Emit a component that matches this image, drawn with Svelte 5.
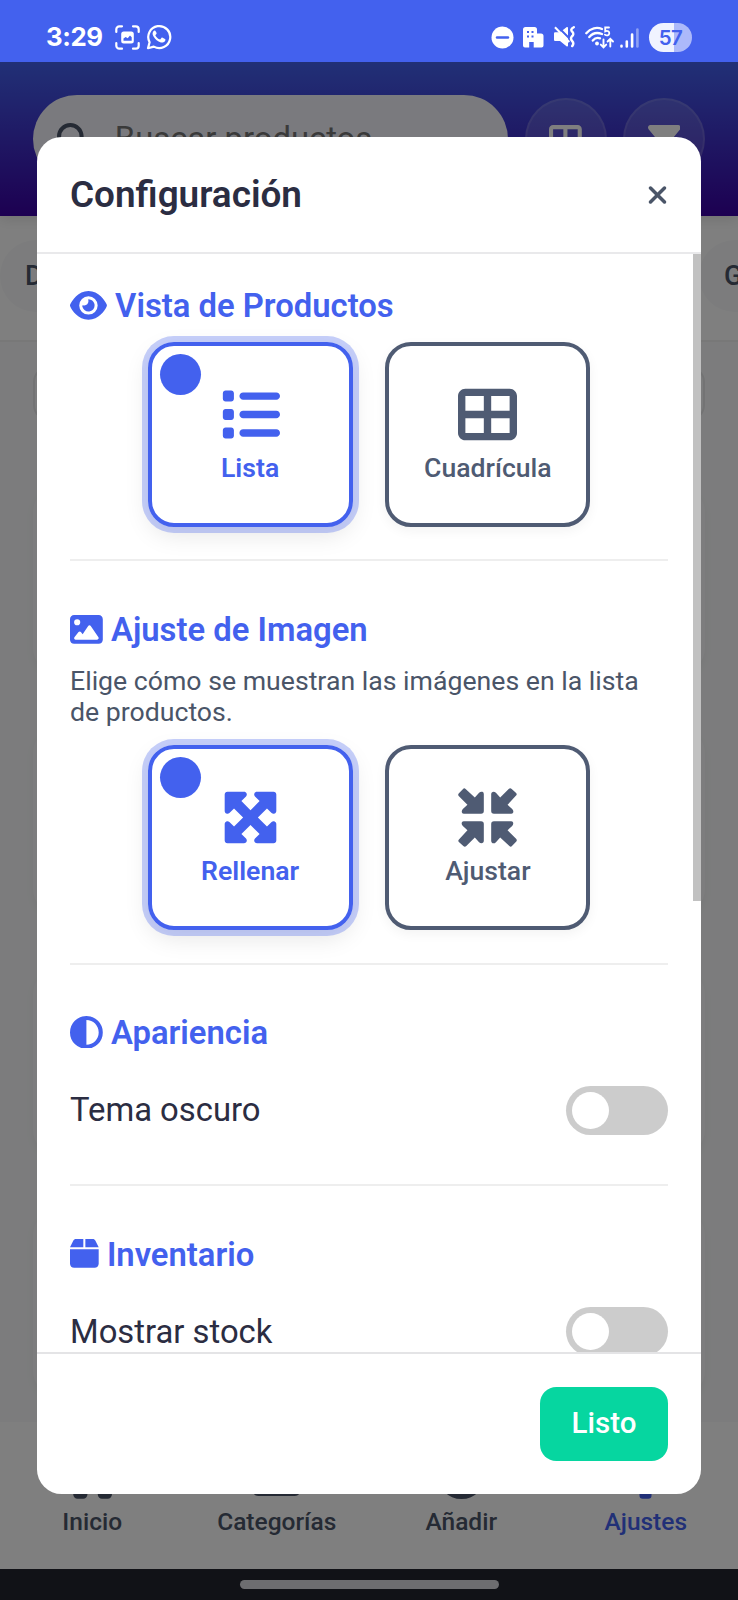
<script>
  const arrowIn = 'M66 8L146 82L183 42Q196 28 212 33Q224 38 224 52V200Q224 224 200 224H52Q38 224 34 212Q29 196 42 183L82 146L8 72Q-5 59 8 46L42 10Q54 -4 66 8z';

  const icons = {
    eye: { w: 576, d: 'M288 32c-80.8 0-145.5 36.8-192.6 80.6C48.6 156 17.3 208 2.5 243.7c-3.3 7.9-3.3 16.7 0 24.6C17.3 304 48.6 356 95.4 399.4C142.5 443.2 207.2 480 288 480s145.5-36.8 192.6-80.6c46.8-43.5 78.1-95.4 93-131.1c3.3-7.9 3.3-16.7 0-24.6c-14.9-35.7-46.2-87.7-93-131.1C433.5 68.8 368.8 32 288 32zM144 256a144 144 0 1 1 288 0 144 144 0 1 1 -288 0zm144-64c0 35.3-28.7 64-64 64c-7.1 0-13.9-1.2-20.3-3.3c-5.5-1.8-11.9 1.6-11.7 7.4c.3 6.9 1.3 13.8 3.2 20.7c13.7 51.2 66.4 81.6 117.6 67.9s81.6-66.4 67.9-117.6c-11.1-41.5-47.8-69.4-88.6-71.1c-5.8-.2-9.2 6.1-7.4 11.7c2.1 6.4 3.3 13.2 3.3 20.3z' },
    image: { w: 512, d: 'M0 96C0 60.7 28.7 32 64 32H448c35.3 0 64 28.7 64 64V416c0 35.3-28.7 64-64 64H64c-35.3 0-64-28.7-64-64V96zM323.8 202.5c-4.5-6.6-11.9-10.5-19.8-10.5s-15.4 3.9-19.8 10.5l-87 127.6L170.7 297c-4.6-5.7-11.5-9-18.7-9s-14.2 3.3-18.7 9l-64 80c-5.8 7.2-6.9 17.1-2.9 25.4s12.4 13.6 21.6 13.6h96 32H424c8.9 0 17.1-4.9 21.2-12.8s3.6-17.4-1.4-24.7l-120-176zM112 192a48 48 0 1 0 0-96 48 48 0 1 0 0 96z' },
    half: { w: 512, d: 'M448 256c0-106-86-192-192-192V448c106 0 192-86 192-192zM0 256a256 256 0 1 1 512 0A256 256 0 1 1 0 256z' },
    box: { w: 448, d: 'M50.7 58.5L0 160H208V32H93.7C75.5 32 58.9 42.3 50.7 58.5zM240 160H448L397.3 58.5C389.1 42.3 372.5 32 354.3 32H240V160zm208 32H0V416c0 35.3 28.7 64 64 64H384c35.3 0 64-28.7 64-64V192z' },
    list: { w: 512, d: 'M40 48C26.7 48 16 58.7 16 72v48c0 13.3 10.7 24 24 24H88c13.3 0 24-10.7 24-24V72c0-13.3-10.7-24-24-24H40zM192 64c-17.7 0-32 14.3-32 32s14.3 32 32 32H480c17.7 0 32-14.3 32-32s-14.3-32-32-32H192zm0 160c-17.7 0-32 14.3-32 32s14.3 32 32 32H480c17.7 0 32-14.3 32-32s-14.3-32-32-32H192zm0 160c-17.7 0-32 14.3-32 32s14.3 32 32 32H480c17.7 0 32-14.3 32-32s-14.3-32-32-32H192zM16 232v48c0 13.3 10.7 24 24 24H88c13.3 0 24-10.7 24-24V232c0-13.3-10.7-24-24-24H40c-13.3 0-24 10.7-24 24zM40 368c-13.3 0-24 10.7-24 24v48c0 13.3 10.7 24 24 24H88c13.3 0 24-10.7 24-24V392c0-13.3-10.7-24-24-24H40z' },
    grid: { w: 512, d: 'M448 96V224H288V96H448zm0 192V416H288V288H448zM224 224H64V96H224V224zM64 288H224V416H64V288zM64 32C28.7 32 0 60.7 0 96V416c0 35.3 28.7 64 64 64H448c35.3 0 64-28.7 64-64V96c0-35.3-28.7-64-64-64H64z' },
    maximize: { w: 512, d: 'M200 32H56C42.7 32 32 42.7 32 56V200c0 9.7 5.8 18.5 14.8 22.2s19.3 1.7 26.2-5.2l40-40 79 79-79 79L73 295c-6.9-6.9-17.2-8.9-26.2-5.2S32 302.3 32 312V456c0 13.3 10.7 24 24 24H200c9.7 0 18.5-5.8 22.2-14.8s1.7-19.3-5.2-26.2l-40-40 79-79 79 79-40 40c-6.9 6.9-8.9 17.2-5.2 26.2s12.5 14.8 22.2 14.8H456c13.3 0 24-10.7 24-24V312c0-9.7-5.8-18.5-14.8-22.2s-19.3-1.7-26.2 5.2l-40 40-79-79 79-79 40 40c6.9 6.9 17.2 8.9 26.2 5.2s14.8-12.5 14.8-22.2V56c0-13.3-10.7-24-24-24H312c-9.7 0-18.5 5.8-22.2 14.8s-1.7 19.3 5.2 26.2l40 40-79 79-79-79 40-40c6.9-6.9 8.9-17.2 5.2-26.2S209.7 32 200 32z' },
    minimize: { w: 512, turns: [90, 180, 270], d: arrowIn },
    close: { w: 384, d: 'M342.6 150.6c12.5-12.5 12.5-32.8 0-45.3s-32.8-12.5-45.3 0L192 210.7 86.6 105.4c-12.5-12.5-32.8-12.5-45.3 0s-12.5 32.8 0 45.3L146.7 256 41.4 361.4c-12.5 12.5-12.5 32.8 0 45.3s32.8 12.5 45.3 0L192 301.3 297.4 406.6c12.5 12.5 32.8 12.5 45.3 0s12.5-32.8 0-45.3L237.3 256 342.6 150.6z' },
    filter: { w: 512, d: 'M3.9 54.9C10.5 40.9 24.5 32 40 32H472c15.5 0 29.5 8.9 36.1 22.9s4.6 30.5-5.2 42.5L320 320.9V448c0 12.1-6.8 23.2-17.7 28.6s-23.8 4.3-33.5-3l-64-48c-8.1-6-12.8-15.5-12.8-25.6V320.9L9 97.3C-.7 85.4-2.8 68.8 3.9 54.9z' },
    search: { w: 512, d: 'M416 208c0 45.9-14.9 88.3-40 122.7L502.6 457.4c12.5 12.5 12.5 32.8 0 45.3s-32.8 12.5-45.3 0L330.7 376c-34.4 25.2-76.8 40-122.7 40C93.1 416 0 322.9 0 208S93.1 0 208 0S416 93.1 416 208zM208 352a144 144 0 1 0 0-288 144 144 0 1 0 0 288z' },
    home: { w: 512, d: 'M256 20L10 240h45v226a44 44 0 0 0 44 44h60a44 44 0 0 0 44-44v-76h108v76a44 44 0 0 0 44 44h60a44 44 0 0 0 44-44V240h45z' },
    folder: { w: 512, d: 'M64 480H448c35.3 0 64-28.7 64-64V160c0-35.3-28.7-64-64-64H288L240 45c-8-8-20-13-32-13H64C28.7 32 0 60.7 0 96V416c0 35.3 28.7 64 64 64z' },
    plus: { w: 512, d: 'M256 512A256 256 0 1 0 256 0a256 256 0 1 0 0 512zM232 344V280H168V232h64V168h48v64h64v48H280v64z' },
    sliders: { w: 512, d: 'M224 30a30 30 0 0 1 64 0V140H224zM180 160H332V270H180zM193 290H319V476a34 34 0 0 1-34 34H227a34 34 0 0 1-34-34z' }
  };

  const viewOptions = [
    { icon: 'list', label: 'Lista', active: true },
    { icon: 'grid', label: 'Cuadrícula', active: false }
  ];
  const fitOptions = [
    { icon: 'maximize', label: 'Rellenar', active: true },
    { icon: 'minimize', label: 'Ajustar', active: false }
  ];
  const nav = [
    { icon: 'home', label: 'Inicio' },
    { icon: 'folder', label: 'Categorías' },
    { icon: 'plus', label: 'Añadir' },
    { icon: 'sliders', label: 'Ajustes', current: true }
  ];
</script>

{#snippet glyph(name)}
  <svg class="glyph" viewBox="0 0 {icons[name].w} 512" style:width="{icons[name].w / 512}em" aria-hidden="true">
    <path d={icons[name].d} />
    {#each icons[name].turns ?? [] as angle}<path d={icons[name].d} transform="rotate({angle} 256 256)" />{/each}
  </svg>
{/snippet}

{#snippet cards(options)}
  <div class="options">
    {#each options as o}
      <button class="option" class:active={o.active}>
        {#if o.active}<span class="dot"></span>{/if}
        {@render glyph(o.icon)}
        <span class="option-label">{o.label}</span>
      </button>
    {/each}
  </div>
{/snippet}

<div class="phone">
  <div class="status">
    <span class="time">3:29</span>
    <svg class="s-shot" width="25" height="25" viewBox="0 0 25 25" fill="none" stroke="#fff" stroke-width="2.2" stroke-linecap="round">
      <path d="M1.3 7V4.3a3 3 0 0 1 3-3H7M18 1.3h2.7a3 3 0 0 1 3 3V7M23.7 18v2.7a3 3 0 0 1-3 3H18M7 23.7H4.300a3 3 0 0 1-3-3V18" />
      <rect x="6.200" y="6.500" width="12.600" height="12" rx="2.500" fill="#fff" stroke="none" />
      <path d="M8.500 15.800v-2.300l2.200-1.600 2 1.400 2.300-2.700 1.700 1.600v3.600z" fill="#4361ee" stroke="none" />
    </svg>
    <svg class="s-wa" width="26" height="26" viewBox="0 0 26 26" fill="none" stroke="#fff" stroke-width="2.200">
      <path d="M2 24.200l1.600-5.900A11 11 0 1 1 7.800 22.600z" stroke-linejoin="round" />
      <path d="M9.300 6.800c-.5-.5-1.200-.4-1.700.2-1.300 1.400-1.300 3.400-.2 5.200 1.900 3.200 4.300 5.300 7.500 6.200 1.700.5 3.700-.2 4.400-1.900.3-.8.2-1.300-.3-1.600l-2.400-1.200c-.5-.2-.9-.1-1.200.3l-1 1.200c-.3.3-.6.3-1 .1-1.700-.8-3-2-3.900-3.600-.2-.4-.1-.6.200-.9l.7-.9c.3-.4.300-.7.100-1.100z" fill="#fff" stroke="none" />
    </svg>
    <span class="grow"></span>
    <svg width="23" height="23" viewBox="0 0 23 23"><circle cx="11.500" cy="11.500" r="11" fill="#fff" /><path d="M6 11.500h11" stroke="#4361ee" stroke-width="2.400" stroke-linecap="round" /></svg>
    <svg class="s-bld" width="21" height="21" viewBox="0 0 21 21">
      <path d="M2.500 0h9A2.500 2.500 0 0 1 14 2.500V6.500h4A2.500 2.500 0 0 1 20.500 9v9.500a2 2 0 0 1-2 2H10.700v-5.500H6.200v5.500H2a2 2 0 0 1-2-2v-16A2.500 2.500 0 0 1 2.500 0z" fill="#fff" />
      <path d="M4 4h2v2H4zM8.500 4h2v2h-2zM4 8.500h2v2H4zM8.500 8.500h2v2h-2z" fill="#4361ee" />
    </svg>
    <svg class="s-mute" width="22" height="22" viewBox="0 0 22 22">
      <path d="M0 7.500C0 6.700.6 6.200 1.300 6.200H6L12.500 1.200c.6-.5 1.500 0 1.500.8V19.500c0 .8-.9 1.300-1.500.8L6 15H1.300C.6 15 0 14.500 0 13.700z" fill="#fff" />
      <path d="M3 0L15.500 12.500" stroke="#4361ee" stroke-width="2" />
      <path d="M1 1.200L15.300 16" stroke="#fff" stroke-width="2" />
      <path d="M19.800 1.200q-4 2 -1.600 4.500t-.4 4.800q-1.800 2.200.4 4.600t0 5" stroke="#fff" fill="none" stroke-width="2.400" stroke-linecap="round" />
    </svg>
    <svg class="s-wifi" width="30" height="23" viewBox="0 0 30 23" fill="none" stroke="#fff" stroke-width="2.300" stroke-linecap="round">
      <path d="M1.300 7.200C5.500 2 12 .8 17 3M4.300 11C7.500 7.200 12.500 6.300 17 8M7.800 14.500C9.700 12.200 12.500 11.500 15 12.300" />
      <circle cx="12" cy="17.500" r="1.900" fill="#fff" stroke="none" />
      <path d="M18.500 13.500v7.500M15.800 18.600l2.700 2.700 2.700-2.700M25.300 20.500V13.200M22.600 15.500l2.700-2.700 2.700 2.700" stroke-width="1.900" />
      <path d="M24 1.500h-3.800v3.800c2.500-1 4.300.2 4.100 2.100-.2 2-2.700 2.600-4.400 1.200" stroke-width="1.800" />
    </svg>
    <svg class="s-sig" width="19" height="20" viewBox="0 0 19 20" stroke="#fff" stroke-width="2.600" stroke-linecap="round">
      <path d="M1.500 17.800v.7M6.800 13.500v5M12.100 6.500v12" /><path d="M17.400 1.500v17" opacity=".4" />
    </svg>
    <span class="battery">57</span>
  </div>

  <div class="screen">
    <header class="topbar">
      <div class="search">{@render glyph('search')}<span>Buscar productos...</span></div>
      <button class="round">{@render glyph('grid')}</button>
      <button class="round">{@render glyph('filter')}</button>
    </header>
    <div class="chips">
      <span class="chip first">Destacados</span>
      <span class="chip last">G</span>
    </div>
    <div class="feed">
      <div class="sort"></div>
      <div class="product"></div>
      <div class="product"></div>
      <div class="product"></div>
      <div class="product"></div>
    </div>
    <nav class="tabs">
      {#each nav as item}
        <div class="tab" class:current={item.current}>
          {@render glyph(item.icon)}
          <span>{item.label}</span>
        </div>
      {/each}
    </nav>

    <div class="overlay">
      <section class="modal">
        <div class="head">
          <h2>Configuración</h2>
          <button class="close" aria-label="Cerrar">{@render glyph('close')}</button>
        </div>
        <div class="body">
          <div class="group">
            <h3>{@render glyph('eye')}Vista de Productos</h3>
            {@render cards(viewOptions)}
          </div>
          <div class="group">
            <h3>{@render glyph('image')}Ajuste de Imagen</h3>
            <p>Elige cómo se muestran las imágenes en la lista de productos.</p>
            {@render cards(fitOptions)}
          </div>
          <div class="group toggles">
            <h3>{@render glyph('half')}Apariencia</h3>
            <div class="row"><span>Tema oscuro</span><span class="switch"></span></div>
          </div>
          <div class="group toggles">
            <h3>{@render glyph('box')}Inventario</h3>
            <div class="row"><span>Mostrar stock</span><span class="switch"></span></div>
          </div>
          <div class="thumb"></div>
        </div>
        <div class="foot"><button class="done">Listo</button></div>
      </section>
    </div>
  </div>
  <div class="gesture"><span></span></div>
</div>

<style>
  :global(body) { background: #111217; }
  * { box-sizing: border-box; }
  button { font: inherit; color: inherit; padding: 0; margin: 0; border: 0; background: none; }
  h2, h3, p { margin: 0; }
  svg { flex: none; display: block; }
  .glyph { height: 1em; fill: currentColor; }
  .phone {
    width: 738px; height: 1600px; overflow: hidden;
    display: flex; flex-direction: column;
    font-family: Roboto, "Liberation Sans", sans-serif;
    font-size: 32.8px;
  }

  .status {
    height: 62px; flex: none; background: #4361ee; color: #fff;
    display: flex; align-items: center; padding: 12px 46px 0 46px;
  }
  .time { font: 700 25.800px/30px Inter, Roboto, sans-serif; width: 69px; letter-spacing: -.4px; }
  .s-wa { margin-left: 6px; }
  .grow { flex: 1; }
  .s-bld { margin-left: 9px; }
  .s-mute { margin-left: 10px; }
  .s-wifi { margin-left: 9px; }
  .s-sig { margin-left: 5px; margin-top: 1px; }
  .battery {
    margin-left: 10px; width: 43px; height: 29px; border-radius: 15px;
    background: linear-gradient(90deg, #f0f3ff 57%, #acb9fa 57%);
    color: #4361ee; font: 600 20.500px/29px Inter, Roboto, sans-serif; text-align: center; letter-spacing: -.5px;
  }

  .screen { position: relative; flex: 1; display: flex; flex-direction: column; background: #f8f9fa; overflow: hidden; }
  .topbar {
    height: 154px; flex: none; padding: 0 33px; display: flex; align-items: center; gap: 16.500px;
    background: linear-gradient(180deg, #4361ee, #3a00a3);
    box-shadow: 0 4px 12px rgba(0, 0, 0, .1); position: relative;
  }
  .search {
    width: 475px; height: 88px; flex: none; border-radius: 44px; background: rgba(255, 255, 255, .95);
    display: flex; align-items: center; padding-left: 24px; gap: 25px;
    color: #757575; line-height: 38px;
  }
  .search .glyph { color: #4a5568; }
  .round {
    width: 82px; height: 82px; border-radius: 50%; flex: none;
    border: 2px solid rgba(255, 255, 255, .1); background: rgba(255, 255, 255, .15);
    color: #fff; display: flex; align-items: center; justify-content: center;
  }
  .chips {
    height: 126px; flex: none; background: #fff; border-bottom: 2px solid #f1f1f1;
    display: flex; justify-content: space-between; align-items: center; padding-bottom: 4px;
    font-size: 27.200px; font-weight: 500; color: #4a5568; white-space: nowrap;
  }
  .chip { height: 72px; line-height: 72px; border-radius: 36px; background: #f8f9fa; }
  .first { padding: 0 25px; }
  .last { padding-left: 25px; width: 39px; border-radius: 36px 0 0 36px; }
  .feed { flex: 1; padding: 24px 33px 0; overflow: hidden; }
  .sort { height: 55px; border-radius: 16px; border: 2px solid #e6e6e8; margin-bottom: 67px; }
  .product { height: 184px; border-radius: 24px; box-shadow: 0 4px 10px rgba(0, 0, 0, .04); margin-bottom: 57px; background: #fbfbfc; }
  .tabs { height: 147px; flex: none; background: #fff; display: flex; }
  .tab {
    flex: 1; display: flex; flex-direction: column; align-items: center; justify-content: flex-end;
    padding-bottom: 32.500px; gap: 9px; color: #4a5568; font-size: 24.500px; line-height: 28.500px; font-weight: 500;
  }
  .tab .glyph { font-size: 49px; }
  .tab.current { color: #4361ee; }

  .overlay {
    position: absolute; inset: 0; background: rgba(0, 0, 0, .5);
    display: flex; align-items: center; justify-content: center;
  }
  .modal {
    width: 664px; height: 1357px; border-radius: 24.600px; background: #fff; overflow: hidden;
    display: flex; flex-direction: column; color: #2b2d42;
  }
  .head {
    height: 117px; flex: none; padding: 0 33px; border-bottom: 2px solid #e9e9eb;
    display: flex; align-items: center; justify-content: space-between;
  }
  h2 { font-size: 36.900px; font-weight: 600; line-height: 44px; }
  .close { color: #4a5568; font-size: 28px; padding-top: 1px; }
  .body { position: relative; flex: 1; min-height: 0; overflow: hidden; padding: 32.800px 33px 0; }
  .group { padding-bottom: 32.800px; border-bottom: 2px solid #eee; margin-bottom: 49.200px; }
  .toggles { padding-bottom: 49.200px; }
  h3 {
    height: 39px; display: flex; align-items: center; gap: 8.200px;
    font-size: 32.800px; font-weight: 600; color: #4361ee; margin-bottom: 16.400px;
  }
  h3 .glyph { margin-top: -2.500px; }
  p { font-size: 26.660px; line-height: 31.400px; color: #4a5568; margin-bottom: 16.400px; }
  .options { display: flex; justify-content: center; gap: 32.800px; }
  .option {
    position: relative; width: 205px; height: 184.500px; border: 4px solid #4f5b73; border-radius: 26px;
    color: #4f5b73; display: flex; flex-direction: column; align-items: center; justify-content: center; gap: 9.200px;
    box-shadow: 0 4px 12px rgba(0, 0, 0, .05);
  }
  .option .glyph { font-size: 59px; }
  .option-label { font-size: 26.600px; line-height: 30.800px; font-weight: 500; }
  .active { border-color: #4361ee; color: #4361ee; box-shadow: 0 0 0 6px rgba(67, 97, 238, .3), 0 8px 24px rgba(0, 0, 0, .1); }
  .active .option-label { font-weight: 600; }
  .dot { position: absolute; left: 8.200px; top: 8.200px; width: 41px; height: 41px; border-radius: 50%; background: #4361ee; }
  .row { display: flex; align-items: center; justify-content: space-between; margin-top: 32.800px; height: 49.200px; }
  .switch { width: 102.500px; height: 49.200px; border-radius: 25px; background: #ccc; padding: 6.150px; }
  .switch::before { content: ""; display: block; width: 36.900px; height: 36.900px; border-radius: 50%; background: #fff; }
  .thumb { position: absolute; right: 0; top: 0; width: 8px; height: 647px; background: #c1c1c1; }
  .foot {
    height: 142px; flex: none; border-top: 2px solid #e4e4e6; padding: 0 33px;
    display: flex; align-items: center; justify-content: flex-end;
  }
  .done { width: 128px; height: 74px; border-radius: 16.400px; background: #06d6a0; color: #fff; font-size: 29.500px; font-weight: 500; padding-bottom: 3px; }

  .gesture { height: 31px; flex: none; background: #111217; display: flex; justify-content: center; padding-top: 11px; }
  .gesture span { width: 259px; height: 8.500px; border-radius: 5px; background: #6d6d70; }
</style>
